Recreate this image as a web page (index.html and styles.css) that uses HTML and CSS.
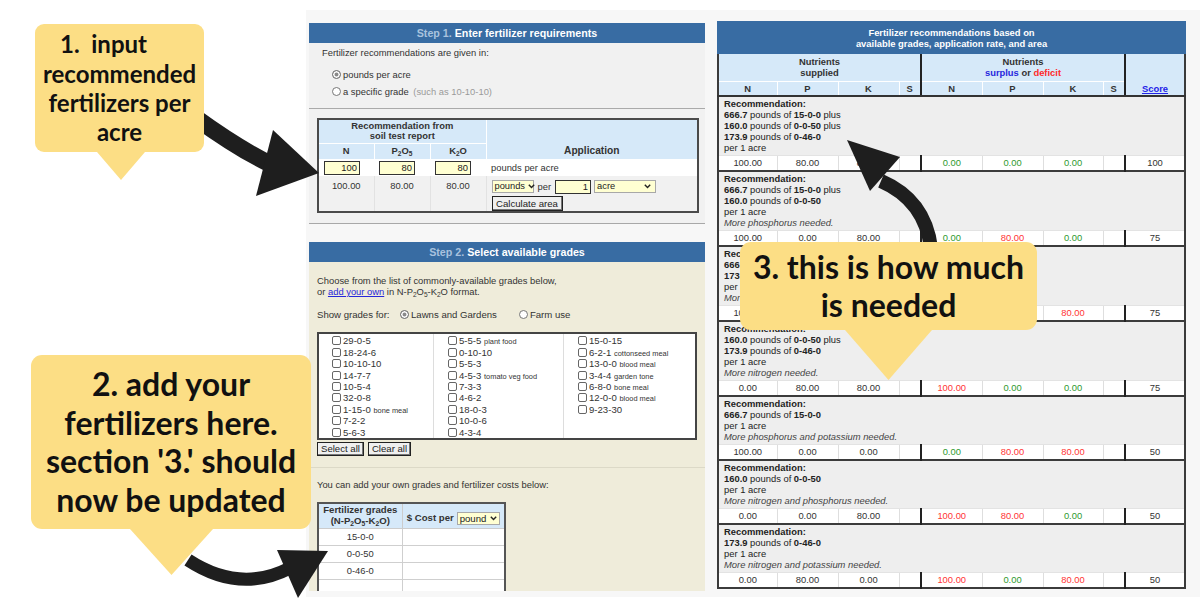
FILE: index.html
```html
<!DOCTYPE html>
<html lang="en">
<head>
<meta charset="utf-8">
<title>Fertilizer calculator walkthrough</title>
<link rel="stylesheet" href="styles.css">
</head>
<body>
<div class="page">
  <div class="shot">
    <div class="left-col">
      <section class="step step1">
        <h2 class="step-head"><span class="step-no">Step 1.</span> Enter fertilizer requirements</h2>
        <div class="step-body">
          <p class="intro">Fertilizer recommendations are given in:</p>
          <div class="radios">
            <label class="radio-row"><input type="radio" name="unit" checked>pounds per acre</label>
            <label class="radio-row"><input type="radio" name="unit">a specific grade&nbsp;<span class="muted">(such as 10-10-10)</span></label>
          </div>
          <div class="sep"></div>
          <table class="req">
            <colgroup><col class="c-nut"><col class="c-nut"><col class="c-nut"><col class="c-app"></colgroup>
            <thead>
              <tr class="rh1"><th colspan="3">Recommendation from<br>soil test report</th><th rowspan="2" class="app-h">Application</th></tr>
              <tr class="rh2"><th>N</th><th>P<sub>2</sub>O<sub>5</sub></th><th>K<sub>2</sub>O</th></tr>
            </thead>
            <tbody>
              <tr class="in-row">
                <td class="in-cell"><input class="num" value="100"></td>
                <td class="in-cell"><input class="num" value="80"></td>
                <td class="in-cell"><input class="num" value="80"></td>
                <td class="app">pounds per acre</td>
              </tr>
              <tr class="calc-row">
                <td>100.00</td><td>80.00</td><td>80.00</td>
                <td class="app">
                  <div class="app-line">
                    <span class="sel sel-pounds">pounds<svg width="7" height="5" viewBox="0 0 7 5"><path d="M0.8 0.8 L3.5 3.6 L6.2 0.8" fill="none" stroke="#222" stroke-width="1.4"/></svg></span>
                    <span>per</span>
                    <input class="num num-area" value="1">
                    <span class="sel sel-acre">acre<svg width="7" height="5" viewBox="0 0 7 5"><path d="M0.8 0.8 L3.5 3.6 L6.2 0.8" fill="none" stroke="#222" stroke-width="1.4"/></svg></span>
                  </div>
                  <button class="btn">Calculate area</button>
                </td>
              </tr>
            </tbody>
          </table>
        </div>
      </section>

      <section class="step step2">
        <h2 class="step-head"><span class="step-no">Step 2.</span> Select available grades</h2>
        <div class="step-body">
          <p class="choose">Choose from the list of commonly-available grades below,<br>or <a href="#" class="link">add your own</a> in N-P<sub>2</sub>O<sub>5</sub>-K<sub>2</sub>O format.</p>
          <div class="show">
            <span class="show-label">Show grades for:</span>
            <label class="radio-row"><input type="radio" name="use" checked>Lawns and Gardens</label>
            <label class="radio-row farm"><input type="radio" name="use">Farm use</label>
          </div>
          <div class="grid-box">
            <div class="gcol">
              <label class="item"><input type="checkbox"><span>29-0-5</span></label>
              <label class="item"><input type="checkbox"><span>18-24-6</span></label>
              <label class="item"><input type="checkbox"><span>10-10-10</span></label>
              <label class="item"><input type="checkbox"><span>14-7-7</span></label>
              <label class="item"><input type="checkbox"><span>10-5-4</span></label>
              <label class="item"><input type="checkbox"><span>32-0-8</span></label>
              <label class="item"><input type="checkbox"><span>1-15-0 <small>bone meal</small></span></label>
              <label class="item"><input type="checkbox"><span>7-2-2</span></label>
              <label class="item"><input type="checkbox"><span>5-6-3</span></label>
            </div>
            <div class="gcol">
              <label class="item"><input type="checkbox"><span>5-5-5 <small>plant food</small></span></label>
              <label class="item"><input type="checkbox"><span>0-10-10</span></label>
              <label class="item"><input type="checkbox"><span>5-5-3</span></label>
              <label class="item"><input type="checkbox"><span>4-5-3 <small>tomato veg food</small></span></label>
              <label class="item"><input type="checkbox"><span>7-3-3</span></label>
              <label class="item"><input type="checkbox"><span>4-6-2</span></label>
              <label class="item"><input type="checkbox"><span>18-0-3</span></label>
              <label class="item"><input type="checkbox"><span>10-0-6</span></label>
              <label class="item"><input type="checkbox"><span>4-3-4</span></label>
            </div>
            <div class="gcol">
              <label class="item"><input type="checkbox"><span>15-0-15</span></label>
              <label class="item"><input type="checkbox"><span>6-2-1 <small>cottonseed meal</small></span></label>
              <label class="item"><input type="checkbox"><span>13-0-0 <small>blood meal</small></span></label>
              <label class="item"><input type="checkbox"><span>3-4-4 <small>garden tone</small></span></label>
              <label class="item"><input type="checkbox"><span>6-8-0 <small>bone meal</small></span></label>
              <label class="item"><input type="checkbox"><span>12-0-0 <small>blood meal</small></span></label>
              <label class="item"><input type="checkbox"><span>9-23-30</span></label>
            </div>
          </div>
          <div class="btn-row">
            <button class="btn">Select all</button>
            <button class="btn">Clear all</button>
          </div>
          <div class="sep2"></div>
          <p class="costs-intro">You can add your own grades and fertilizer costs below:</p>
          <table class="grades">
            <colgroup><col class="g-grade"><col class="g-cost"></colgroup>
            <thead>
              <tr>
                <th>Fertilizer grades<br>(N-P<sub>2</sub>O<sub>5</sub>-K<sub>2</sub>O)</th>
                <th><span class="cost-h">$ Cost per <span class="sel sel-pound">pound<svg width="7" height="5" viewBox="0 0 7 5"><path d="M0.8 0.8 L3.5 3.6 L6.2 0.8" fill="none" stroke="#222" stroke-width="1.4"/></svg></span></span></th>
              </tr>
            </thead>
            <tbody>
              <tr><td>15-0-0</td><td></td></tr>
              <tr><td>0-0-50</td><td></td></tr>
              <tr><td>0-46-0</td><td></td></tr>
              <tr><td></td><td></td></tr>
              <tr><td></td><td></td></tr>
            </tbody>
          </table>
        </div>
      </section>
    </div>

    <div class="right-col">
      <table class="results">
        <colgroup>
          <col class="w59"><col class="w61"><col class="w61"><col class="w22">
          <col class="w61"><col class="w61"><col class="w60"><col class="w22"><col class="w60">
        </colgroup>
        <thead>
          <tr><th colspan="9" class="top">Fertilizer recommendations based on<br>available grades, application rate, and area</th></tr>
          <tr class="h1">
            <th colspan="4">Nutrients<br>supplied</th>
            <th colspan="4" class="grp">Nutrients<br><span class="surplus">surplus</span> or <span class="deficit">deficit</span></th>
            <th rowspan="2" class="grp score-h"><a href="#" class="score">Score</a></th>
          </tr>
          <tr class="h2"><th>N</th><th>P</th><th>K</th><th>S</th><th class="grp">N</th><th>P</th><th>K</th><th>S</th></tr>
        </thead>
        <tbody>
          <tr class="rec"><td colspan="9"><b>Recommendation:</b><br><b>666.7</b> pounds of <b>15-0-0</b> plus<br><b>160.0</b> pounds of <b>0-0-50</b> plus<br><b>173.9</b> pounds of <b>0-46-0</b><br>per 1 acre</td></tr>
          <tr class="nums"><td>100.00</td><td>80.00</td><td>80.00</td><td></td><td class="grp g">0.00</td><td class="g">0.00</td><td class="g">0.00</td><td></td><td class="grp">100</td></tr>
        </tbody>
        <tbody>
          <tr class="rec"><td colspan="9"><b>Recommendation:</b><br><b>666.7</b> pounds of <b>15-0-0</b> plus<br><b>160.0</b> pounds of <b>0-0-50</b><br>per 1 acre<br><i>More phosphorus needed.</i></td></tr>
          <tr class="nums"><td>100.00</td><td>0.00</td><td>80.00</td><td></td><td class="grp g">0.00</td><td class="r">80.00</td><td class="g">0.00</td><td></td><td class="grp">75</td></tr>
        </tbody>
        <tbody>
          <tr class="rec"><td colspan="9"><b>Recommendation:</b><br><b>666.7</b> pounds of <b>15-0-0</b> plus<br><b>173.9</b> pounds of <b>0-46-0</b><br>per 1 acre<br><i>More potassium needed.</i></td></tr>
          <tr class="nums"><td>100.00</td><td>80.00</td><td>0.00</td><td></td><td class="grp g">0.00</td><td class="g">0.00</td><td class="r">80.00</td><td></td><td class="grp">75</td></tr>
        </tbody>
        <tbody>
          <tr class="rec"><td colspan="9"><b>Recommendation:</b><br><b>160.0</b> pounds of <b>0-0-50</b> plus<br><b>173.9</b> pounds of <b>0-46-0</b><br>per 1 acre<br><i>More nitrogen needed.</i></td></tr>
          <tr class="nums"><td>0.00</td><td>80.00</td><td>80.00</td><td></td><td class="grp r">100.00</td><td class="g">0.00</td><td class="g">0.00</td><td></td><td class="grp">75</td></tr>
        </tbody>
        <tbody>
          <tr class="rec"><td colspan="9"><b>Recommendation:</b><br><b>666.7</b> pounds of <b>15-0-0</b><br>per 1 acre<br><i>More phosphorus and potassium needed.</i></td></tr>
          <tr class="nums"><td>100.00</td><td>0.00</td><td>0.00</td><td></td><td class="grp g">0.00</td><td class="r">80.00</td><td class="r">80.00</td><td></td><td class="grp">50</td></tr>
        </tbody>
        <tbody>
          <tr class="rec"><td colspan="9"><b>Recommendation:</b><br><b>160.0</b> pounds of <b>0-0-50</b><br>per 1 acre<br><i>More nitrogen and phosphorus needed.</i></td></tr>
          <tr class="nums"><td>0.00</td><td>0.00</td><td>80.00</td><td></td><td class="grp r">100.00</td><td class="r">80.00</td><td class="g">0.00</td><td></td><td class="grp">50</td></tr>
        </tbody>
        <tbody>
          <tr class="rec"><td colspan="9"><b>Recommendation:</b><br><b>173.9</b> pounds of <b>0-46-0</b><br>per 1 acre<br><i>More nitrogen and potassium needed.</i></td></tr>
          <tr class="nums"><td>0.00</td><td>80.00</td><td>0.00</td><td></td><td class="grp r">100.00</td><td class="g">0.00</td><td class="r">80.00</td><td></td><td class="grp">50</td></tr>
        </tbody>
      </table>
    </div>
  </div>

  <svg class="arrows" width="1200" height="604" viewBox="0 0 1200 604" aria-hidden="true">
    <path d="M196 118 Q 236 147 268 163" fill="none" stroke="#1e1e1e" stroke-width="17"/>
    <polygon points="273,130 319,173 256,196" fill="#1e1e1e"/>
    <path d="M188 560 Q 240 594 290 568" fill="none" stroke="#1e1e1e" stroke-width="13"/>
    <polygon points="277,550 328,551 298,598" fill="#1e1e1e"/>
    <path d="M881 181 Q 925 200 931 248" fill="none" stroke="#1e1e1e" stroke-width="14"/>
    <polygon points="847,140 870,191 900,157" fill="#1e1e1e"/>
  </svg>

  <div class="callout c1"><p class="txt"><span class="first">1.&nbsp; input</span><br>recommended<br>fertilizers per<br>acre</p></div>
  <div class="callout c2"><p class="txt">2. add your<br>fertilizers here.<br>section '3.' should<br>now be updated</p></div>
  <div class="callout c3"><p class="txt">3. this is how much<br>is needed</p></div>
</div>
</body>
</html>
```

FILE: styles.css
```css
* { box-sizing: border-box; }
html, body { margin: 0; padding: 0; background: #fff; }
body { font-family: "Liberation Sans", Arial, sans-serif; color: #333; font-size: 9.4px; }

.page { position: relative; width: 1200px; height: 604px; overflow: hidden; }

/* screenshot frame */
.shot {
  margin: 10px 0 0 306px;
  width: 894px;
  height: 587px;
  padding: 12px 0 0 3px;
  background: #f7f7f7;
  display: flex;
  gap: 12px;
  align-items: flex-start;
  overflow: hidden;
}
.left-col { width: 396px; padding-top: 1px; display: flex; flex-direction: column; gap: 18px; }
.right-col { width: 469px; }

sub { font-size: 70%; vertical-align: -2px; line-height: 0; }

.step-head {
  margin: 0; height: 20px; line-height: 20px;
  background: #386ca3; color: #fff;
  font-size: 10.7px; font-weight: bold; text-align: center;
}
.step-no { color: #a9c2de; }

/* step 1 */
.step1 .step-body { background: #f1f1f1; border-bottom: 1px solid #a8a8a8; padding: 4px 0 10px; }
.intro { margin: 0 0 0 13px; line-height: 12px; }
.radios { margin-top: 7px; padding-left: 23px; }
.radio-row { display: flex; align-items: center; height: 17px; gap: 2px; }
input[type="radio"] {
  appearance: none; -webkit-appearance: none;
  width: 9px; height: 9px; margin: 0; border: 1px solid #777; border-radius: 50%; background: #fff;
}
input[type="radio"]:checked { background: #8a8a8a; box-shadow: inset 0 0 0 1.5px #fff; }
.muted { color: #9a9a9a; }
.sep { border-top: 1px solid #aaa; margin: 8px 0 9px; }

table.req {
  margin: 0 8px; width: 380px; border-collapse: collapse; table-layout: fixed;
  border: 2px solid #4a4a4a;
}
.req .c-nut { width: 56px; }
.req .c-app { width: 212px; }
.req th { background: #d6e9f9; font-weight: bold; color: #333; padding: 0; border: 1px solid #fff; }
.req .rh1 th { height: 24px; line-height: 10.5px; vertical-align: middle; }
.req .rh2 th { height: 16px; line-height: 12px; }
.req .rh1 th.app-h { vertical-align: bottom; padding-bottom: 2px; font-size: 10.2px; line-height: 13px; }
.req td { padding: 0; }
.req .in-row td { background: #fff; height: 17px; }
.req .in-row td.in-cell { padding-left: 5px; }
.req .in-row td.app { padding-left: 5px; text-align: left; }
.req .calc-row td {
  background: #f1f1f1; height: 35px; vertical-align: top; text-align: center;
  padding-top: 4px; line-height: 12px; border-left: 1px solid #e2e2e2;
}
.req .calc-row td.app { padding: 2px 0 0 5px; text-align: left; }

input.num {
  appearance: none; -webkit-appearance: none; display: block;
  width: 36px; height: 14px; margin: 0; padding: 0 2px;
  border: 1px solid #333; background: #ffffd2;
  font: 9.4px "Liberation Sans", Arial, sans-serif; color: #222; text-align: right;
}
.app-line { display: flex; align-items: center; gap: 4px; height: 17px; }
.num-area { height: 16px; }
.sel {
  display: inline-flex; align-items: center; justify-content: space-between; gap: 3px;
  height: 13px; padding: 0 2px 0 2px; border: 1px solid #a8a8a8; background: #ffffd2;
  font-size: 9.3px; color: #222; line-height: 11px;
}
.sel svg { flex: none; }
.sel-pounds { width: 42px; }
.sel-acre { width: 62px; margin-left: -1px; padding-right: 4px; }
.btn {
  display: inline-block; height: 15px; padding: 0 3px; margin: 0;
  border: 1px solid #222; box-shadow: inset -1px -1px 0 #777;
  background: #efefef; color: #222;
  font: 9.6px "Liberation Sans", Arial, sans-serif; line-height: 12px;
}
.req .btn { margin-top: 1px; width: 71px; }

/* step 2 */
.step2 .step-body { background: #efecda; height: 329px; overflow: hidden; padding-top: 13px; }
.choose { margin: 0 0 0 8px; line-height: 11px; }
.link { color: #2727d9; text-decoration: underline; }
.show { display: flex; align-items: center; height: 14px; margin: 10px 0 0 8px; font-size: 9.6px; }
.show-label { width: 83px; }
.show .radio-row { height: 14px; }
.show .farm { margin-left: 22px; }
.grid-box {
  margin: 11px 8px 0; height: 108px; border: 2px solid #444; background: #fff;
  display: grid; grid-template-columns: 114px 130px 1fr;
}
.gcol { padding: 1px 0 0 14px; border-left: 1px solid #ddd; }
.gcol:first-child { border-left: none; padding-left: 13px; }
.item { display: flex; align-items: center; gap: 2px; height: 11.46px; font-size: 9.6px; color: #333; white-space: nowrap; }
.item small { font-size: 7.4px; }
input[type="checkbox"] {
  appearance: none; -webkit-appearance: none;
  width: 9px; height: 9px; margin: 0; border: 1px solid #666; border-radius: 2px; background: #fff; flex: none;
}
.btn-row { display: flex; gap: 4px; margin: 2px 0 0 8px; }
.btn-row .btn { height: 14px; }
.sep2 { border-top: 1px solid #dcd9c7; margin-top: 11px; }
.costs-intro { margin: 11px 0 0 8px; line-height: 11px; }
table.grades {
  margin: 12px 0 0 8px; width: 187px; border-collapse: collapse; table-layout: fixed;
  border: 2px solid #555; background: #fff;
}
.grades .g-grade { width: 84px; }
.grades .g-cost { width: 103px; }
.grades th {
  background: #d6e9f9; height: 25px; padding: 0; font-weight: bold; color: #333;
  line-height: 10.4px; border: 1px solid #ccc; font-size: 9.6px;
}
.cost-h { display: inline-flex; align-items: center; gap: 3px; margin-top: 5px; }
.sel-pound { width: 43px; font-weight: normal; font-size: 9.6px; }
.grades td { height: 17px; padding: 0; text-align: center; border: 1px solid #cfcfcf; color: #333; }

/* results */
table.results {
  width: 469px; border-collapse: collapse; table-layout: fixed;
  border: 2px solid #3b3b3b; background: #fff; margin-top: -1px;
}
.w59 { width: 59px; } .w61 { width: 61px; } .w60 { width: 60px; } .w22 { width: 22px; }
.results th { padding: 0; font-weight: bold; color: #333; }
.results th.top {
  background: #386ca3; color: #fff; line-height: 11px; padding: 4px 0 5px;
  border: 2px solid #386ca3; border-bottom: none;
}
.results .h1 th { background: #d6e9f9; height: 27px; line-height: 11px; vertical-align: top; padding-top: 2px; border: 1px solid #fff; border-top: none; }
.results .h2 th { background: #d6e9f9; height: 15px; line-height: 13px; border: 1px solid #fff; border-bottom: 2px solid #333; }
.results .h1 th.grp, .results .h2 th.grp { border-left: 2px solid #222; }
.results .h1 th.score-h { vertical-align: bottom; padding-bottom: 1px; border-bottom: 2px solid #333; }
.surplus { color: #2727dd; }
.deficit { color: #ff2a2a; }
.score { color: #2323e8; text-decoration: underline; }
.results tbody { border-top: 2px solid #3b3b3b; }
.results .rec td {
  background: #eeeeee; padding: 1px 5px 1.5px; line-height: 11px; color: #222;
}
.results .rec i { color: #444; }
.results .nums td {
  height: 16px; padding: 0; text-align: center; line-height: 14px; color: #333;
  border-top: 1px solid #e3e3e3; border-left: 1px solid #dedede;
}
.results .nums td.grp { border-left: 2px solid #222; }
.results .nums td:first-child { border-left: none; }
.results .nums td.g { color: #2f9a2f; }
.results .nums td.r { color: #ff3535; }

/* annotation layer */
.arrows { position: absolute; left: 0; top: 0; pointer-events: none; }
.callout {
  position: absolute; background: #fcde85; border-radius: 9px;
  font-family: Lato, "Open Sans", sans-serif; font-weight: 700; color: #111;
  display: flex; align-items: center; justify-content: center;
}
.callout .txt { margin: 0; text-align: center; white-space: nowrap; }
.callout::after {
  content: ""; position: absolute; top: 100%;
  background: #fcde85; clip-path: polygon(0 0, 100% 0, 50% 100%);
}
.c1 { left: 35px; top: 24px; width: 169px; height: 128px; font-size: 24px; line-height: 29.3px; }
.c1::after { left: 62px; width: 48px; height: 28px; }
.c1 .first { margin-right: 32px; }
.c2 { left: 31px; top: 355px; width: 280px; height: 174px; font-size: 32px; line-height: 38.5px; border-radius: 11px; }
.c2::after { left: 99px; width: 83px; height: 46px; }
.c3 { left: 740px; top: 242px; width: 297px; height: 88px; font-size: 32px; line-height: 38.5px; border-radius: 11px; }
.c3::after { left: 105px; width: 87px; height: 50px; }
```
